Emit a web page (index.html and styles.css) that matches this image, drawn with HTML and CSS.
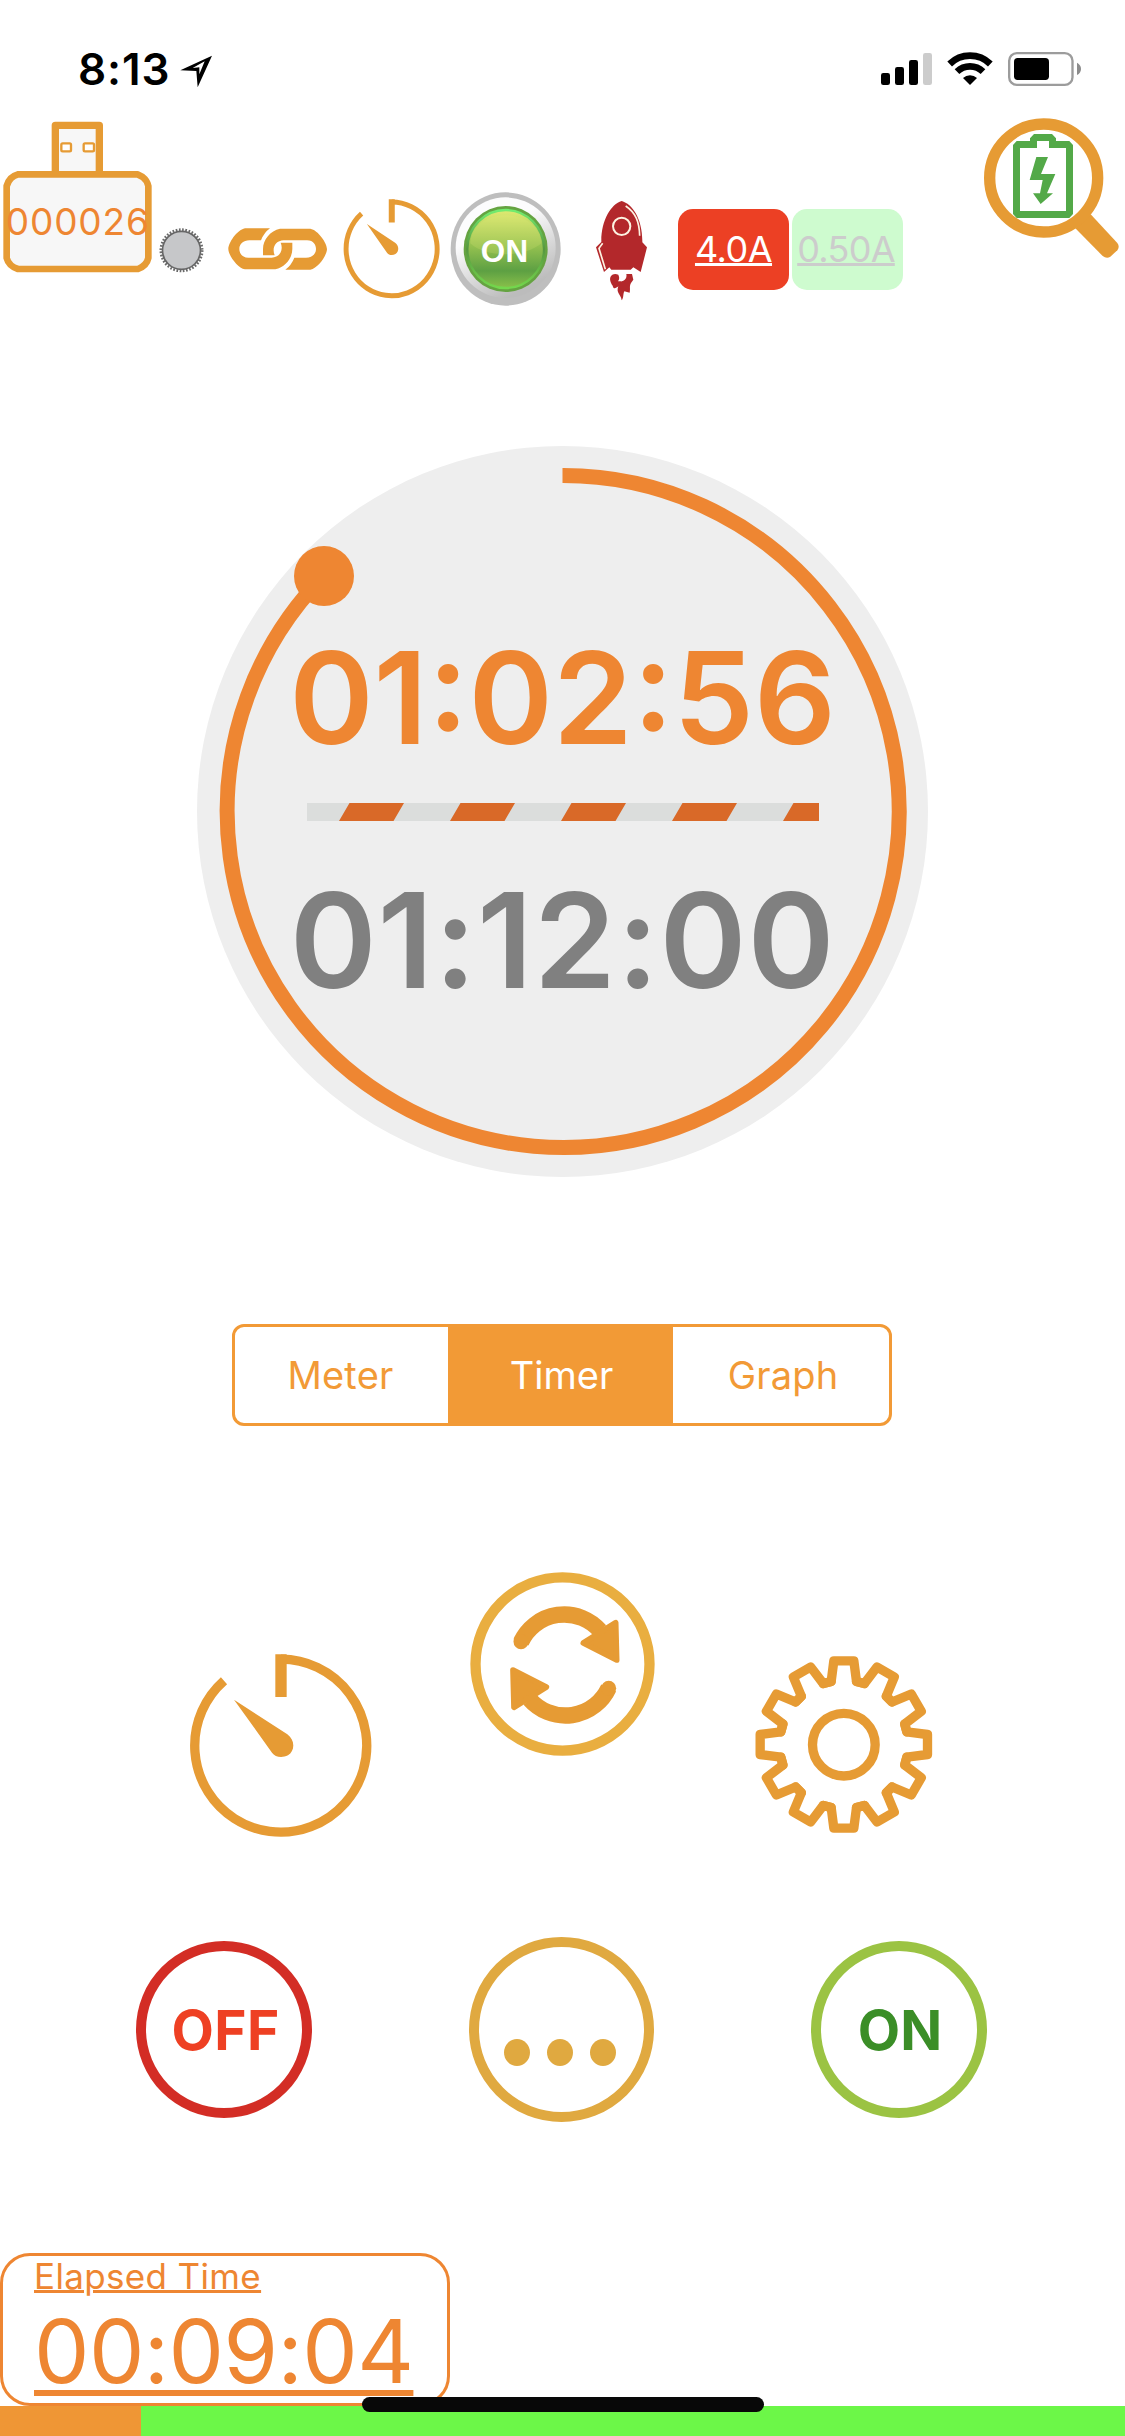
FILE: index.html
```
<!DOCTYPE html>
<html lang="en">
<head>
<meta charset="utf-8">
<title>Charge Timer</title>
<link rel="stylesheet" href="styles.css">
</head>
<body>
<svg class="defs" width="0" height="0" aria-hidden="true">
  <symbol id="stopwatch" viewBox="51 270 561 570" preserveAspectRatio="none">
    <path d="M333 297.500A258 259.500 0 1 1 162 362" fill="none" stroke="#e69b34" stroke-width="28"/>
    <path d="M316 283H350V411H316Z M192 419L352 523C376 540 375 573 354 586C335 595 315 591 306 578Z" fill="#e69b34"/>
  </symbol>
</svg>
<main class="app">
  <header class="status">
    <span class="clock">8:13</span>
    <svg class="locate" viewBox="540 76 99 99"><path fill-rule="evenodd" d="M541 122L636 78L593 173L589 124ZM578 115L614 95L598 134L598 113Z"/></svg>
    <svg class="signals" viewBox="60 60 609 114">
      <g><rect x="63" y="129" width="27" height="36" rx="7"/><rect x="105" y="111" width="27" height="54" rx="7"/><rect x="147" y="90" width="27" height="75" rx="7"/><rect x="189" y="69" width="27" height="96" rx="7" fill="#ccc"/></g>
      <g fill="none" stroke="#000" stroke-width="20"><path d="M269 102A87 87 0 0 1 391 102"/><path d="M291 125A56 56 0 0 1 369 125"/></g>
      <path d="M309 144A31 31 0 0 1 351 144L330 165Z"/>
      <rect x="447.500" y="69.500" width="190" height="95" rx="23" fill="none" stroke="#9c9c9c" stroke-width="7"/>
      <rect x="462" y="84" width="105" height="66" rx="11"/>
      <path d="M651 98C667 106 667 127 651 135Z" fill="#8c8c8c"/>
    </svg>
  </header>

  <nav class="tools">
    <svg class="usb" viewBox="0 255 468 480">
      <path d="M166 434V286H298V434" fill="#f7f7f7" stroke="#e69b34" stroke-width="22" stroke-linejoin="round"/>
      <path d="M55 433H412L428 441Q442 452 445 468V684Q440 707 414 717H54Q26 708 20 684V468Q28 440 55 433Z" fill="#f7f7f7" stroke="#e69b34" stroke-width="20" stroke-linejoin="round"/>
      <rect x="184" y="340" width="29" height="24" rx="4" fill="#fff" stroke="#e69b34" stroke-width="7"/>
      <rect x="251" y="340" width="31" height="24" rx="4" fill="#fff" stroke="#e69b34" stroke-width="7"/>
      <text class="usb-id" x="17" y="614" textLength="430">000026</text>
    </svg>
    <svg class="knob" viewBox="468 585 156 150">
      <circle cx="544.500" cy="661" r="62" fill="none" stroke="#6a6a6a" stroke-width="8" stroke-dasharray="5 4.740"/>
      <circle cx="544.500" cy="661" r="57" fill="#c6c7c9" stroke="#666" stroke-width="5"/>
    </svg>
    <svg class="link" viewBox="672 585 324 150" fill="#e69b34">
      <path id="half" d="M810 595H735C710 600 685 640 685 657C685 675 712 714 735 718H826C855 712 877 685 877 657V638H842C851 660 840 682 815 683H745C725 683 718 668 718 657C718 642 730 631 748 631H783Q792 608 810 595Z"/>
      <use href="#half" transform="rotate(180 833 657)"/>
    </svg>
    <svg class="mini-watch"><use href="#stopwatch"/></svg>
    <svg class="power" viewBox="354 30 345 354">
      <defs>
        <linearGradient id="rim" x1="0" y1="0" x2=".5" y2="1"><stop offset=".4" stop-color="#fcfcfd"/><stop offset="1" stop-color="#bcbcbc"/></linearGradient>
        <linearGradient id="edge" x1="0" y1="0" x2="0" y2="1"><stop offset="0" stop-color="#72ed70"/><stop offset=".5" stop-color="#569640"/><stop offset="1" stop-color="#74d84d"/></linearGradient>
        <linearGradient id="face" x1="0" y1="0" x2="0" y2="1"><stop offset="0" stop-color="#e0ea72"/><stop offset=".47" stop-color="#93c04f"/><stop offset=".78" stop-color="#5da043"/><stop offset="1" stop-color="#8ac04a"/></linearGradient>
      </defs>
      <ellipse cx="527" cy="207" rx="165" ry="170" fill="#bebebe"/>
      <ellipse cx="527" cy="203" rx="150" ry="151" fill="url(#rim)"/>
      <ellipse cx="527" cy="207" rx="126" ry="129" fill="#65a341"/>
      <ellipse cx="527" cy="207" rx="115" ry="117" fill="url(#face)" stroke="url(#edge)" stroke-width="7"/>
      <path d="M421 190C424 78 630 78 634 190C590 230 472 238 421 190Z" fill="#e9ef82" opacity=".18"/>
      <text class="power-text" x="452" y="246" textLength="142">ON</text>
    </svg>
    <svg class="rocket" viewBox="789 57 171 312">
      <path fill="#b3282b" d="M875 63C907 72 938 116 937 187L951 202L932 276L910 262L902 269H844L838 262L822 276L798 202L814 186C813 122 843 72 875 63Z"/>
      <circle cx="875" cy="139" r="26" fill="none" stroke="#fdf3e2" stroke-width="6"/>
      <path d="M887 78C917 98 928 125 929 167" fill="none" stroke="#fdf3e2" stroke-width="5"/>
      <path d="M818 190L807 205L826 268" fill="none" stroke="#fdf3e2" stroke-width="5"/>
      <path fill="#b3282b" d="M865 284C850 277 837 287 841 303C845 317 849 315 849 321C852 328 859 324 865 319C857 340 873 342 875 361C882 352 878 345 883 334L899 338C902 324 897 320 903 309L910 299L906 282H889C893 300 874 306 872 304L864 304C870 295 867 290 865 284Z"/>
    </svg>
    <span class="amp amp-high">4.0A</span>
    <span class="amp amp-low">0.50A</span>
    <svg class="inspect" viewBox="366 255 420 435">
      <path d="M692 553L772 639Q780 650 772 661L751 680Q740 687 728 678L646 595Z" fill="#e69b34"/>
      <circle cx="551" cy="444" r="162" fill="#fff" stroke="#e69b34" stroke-width="34"/>
      <g fill="#53a948" fill-rule="evenodd">
        <path d="M470 333H510V325L522 312H576L588 325V333H628L639 345V552L628 564H470L459 552V345ZM480 354H531V333H567V354H618V543H480Z"/>
        <path d="M529 381H564L543 432H586L561 490H579L542 522L519 490H540L548 450H509Z"/>
      </g>
    </svg>
  </nav>

  <section class="dial">
    <svg class="ring" viewBox="197 446 731 731">
      <path d="M562.500 475.500A336 336 0 1 1 324.500 575" fill="none" stroke="#ee8632" stroke-width="15"/>
      <circle cx="324" cy="576" r="30" fill="#ee8632"/>
    </svg>
    <span class="remaining">01:02:56</span>
    <svg class="stripes" viewBox="0 0 512 18" fill="#d96928">
      <path d="M32 18L42.500 0H97L86.500 18ZM143 18L153.500 0H208L197.500 18ZM254 18L264.500 0H319L308.500 18ZM365 18L375.500 0H430L419.500 18ZM476 18L486.500 0H512V18Z"/>
    </svg>
    <span class="total">01:12:00</span>
  </section>

  <div class="tabs">
    <span class="tab tab-first">Meter</span>
    <span class="tab tab-active">Timer</span>
    <span class="tab tab-last">Graph</span>
  </div>

  <section class="actions">
    <svg class="watch"><use href="#stopwatch"/></svg>
    <svg class="refresh" viewBox="891 27 573 570">
      <ellipse cx="1177.500" cy="312" rx="261" ry="260" fill="none" stroke="#e9ae40" stroke-width="31"/>
      <g id="arrow">
        <path d="M1053 246A143 143 0 0 1 1290 212" fill="none" stroke="#e69b34" stroke-width="49"/>
        <circle cx="1053" cy="245" r="22.500" fill="#e69b34"/>
        <path d="M1337 188L1340 300L1240 249Z" fill="#e69b34" stroke="#e69b34" stroke-width="17" stroke-linejoin="round"/>
      </g>
      <use href="#arrow" transform="rotate(180 1184.500 315)"/>
    </svg>
    <svg class="gear" viewBox="66 66 552 552" fill="none" stroke="#e69b34" stroke-width="28" stroke-linejoin="round" stroke-linecap="round">
      <circle cx="341.500" cy="344" r="94"/>
      <g transform="translate(341.500 343.500)">
        <path id="tooth" d="M-61.600 -182.700L-38 -189L-30 -251H30L38 -189L61.600 -182.700"/>
        <use href="#tooth" transform="rotate(30)"/><use href="#tooth" transform="rotate(60)"/><use href="#tooth" transform="rotate(90)"/><use href="#tooth" transform="rotate(120)"/><use href="#tooth" transform="rotate(150)"/><use href="#tooth" transform="rotate(180)"/><use href="#tooth" transform="rotate(210)"/><use href="#tooth" transform="rotate(240)"/><use href="#tooth" transform="rotate(270)"/><use href="#tooth" transform="rotate(300)"/><use href="#tooth" transform="rotate(330)"/>
      </g>
    </svg>
  </section>

  <section class="switches">
    <span class="round off">OFF</span>
    <span class="round more"><i class="dot"></i><i class="dot"></i><i class="dot"></i></span>
    <span class="round on">ON</span>
  </section>

  <section class="elapsed">
    <span class="elapsed-label">Elapsed Time</span>
    <span class="elapsed-time">00:09:04</span>
  </section>
  <div class="progress"><div class="progress-done"></div></div>
  <div class="home"></div>
</main>
</body>
</html>
```
FILE: styles.css
```
* { box-sizing: border-box; }
body { margin: 0; background: #fff; font-family: Inter, "Liberation Sans", sans-serif; }
svg { display: block; flex: none; }
.defs { position: absolute; }
.app { position: relative; width: 1125px; height: 2436px; overflow: hidden; display: flex; flex-direction: column; }
.app > * { flex: none; }

.status { height: 115px; display: flex; align-items: flex-start; padding: 50px 40px 0 78px; }
.clock { width: 102px; font-size: 44px; font-weight: 600; line-height: 38px; letter-spacing: 0.9px; white-space: nowrap; }
.locate { width: 33px; height: 33px; margin-top: 5px; }
.signals { width: 203px; height: 38px; margin-left: auto; margin-right: 2px; }

.tools { height: 331px; display: flex; align-items: flex-start; }
.usb { width: 156px; height: 160px; }
.usb-id { font-size: 111px; font-weight: 400; fill: #ee8632; }
.knob { width: 52px; height: 50px; margin-top: 110px; }
.link { width: 108px; height: 50px; margin: 110px 0 0 16px; }
.mini-watch { width: 99px; height: 103px; margin: 82px 0 0 10px; }
.power { width: 115px; height: 118px; margin: 75px 0 0 7px; }
.power-text { font-family: "Liberation Sans", sans-serif; font-size: 94px; font-weight: 700; fill: #fff; }
.rocket { width: 57px; height: 104px; margin: 84px 0 0 30px; }
.amp { width: 111px; height: 81px; margin-top: 94px; border-radius: 15px; font-size: 36px; font-weight: 400; line-height: 81px; text-align: center; text-decoration: underline; text-decoration-thickness: 3px; text-underline-offset: 1px; text-decoration-skip-ink: none; white-space: nowrap; }
.amp-high { margin-left: 28px; background: #ec4024; color: #fff; letter-spacing: -0.5px; }
.amp-low { margin-left: 3px; background: #cefbcf; color: #ccc; letter-spacing: -0.7px; padding-right: 3px; }
.inspect { width: 140px; height: 145px; margin-left: 79px; }

.dial { position: relative; width: 731px; height: 731px; margin-left: 197px; padding-top: 187px; border-radius: 50%; background: #eee; display: flex; flex-direction: column; align-items: center; }
.ring { position: absolute; left: 0; top: 0; width: 731px; height: 731px; }
.remaining, .total { position: relative; line-height: 130px; font-weight: 600; white-space: nowrap; }
.remaining { font-size: 128px; color: #ee8632; }
.total { margin-top: 54px; font-size: 132px; letter-spacing: 0.8px; color: #808080; }
.stripes { position: relative; width: 512px; height: 18px; margin-top: 40px; background: #dbdddc; }

.tabs { width: 660px; height: 102px; margin: 147px 0 0 232px; display: flex; border: 3px solid #f29a36; border-radius: 12px; font-size: 38px; line-height: 96px; color: #f29a36; text-align: center; }
.tab-first { width: 213px; letter-spacing: 0.2px; padding-right: 2px; }
.tab-active { width: 225px; background: #f29a36; color: #fff; padding-left: 2px; }
.tab-last { width: 216px; letter-spacing: 0.2px; padding-left: 4px; }

.actions { height: 276px; margin-top: 143px; padding-left: 187px; display: flex; align-items: flex-start; }
.watch { width: 187px; height: 190px; margin-top: 81px; }
.refresh { width: 191px; height: 190px; margin-left: 93px; }
.gear { width: 184px; height: 184px; margin: 83px 0 0 94px; }

.switches { height: 185px; margin-top: 92px; padding-left: 136px; display: flex; align-items: center; }
.round { width: 176px; height: 177px; border: 10px solid; border-radius: 50%; display: flex; align-items: center; justify-content: center; font-size: 55px; font-weight: 700; }
.off { border-color: #d32d25; color: #ee4023; padding-left: 3px; letter-spacing: 0.4px; }
.more { width: 185px; height: 185px; margin-left: 157px; border-color: #e0a940; padding: 45px 3px 0 0; gap: 17px; }
.dot { width: 26px; height: 27px; border-radius: 50%; background: #e0a940; }
.on { margin-left: 157px; padding-left: 2px; border-color: #9bc343; color: #3b8e27; }

.elapsed { width: 450px; height: 153px; margin-top: 131px; padding: 4px 0 0 31px; border: 3px solid #ee8632; border-radius: 30px; display: flex; flex-direction: column; align-items: flex-start; color: #ee8632; white-space: nowrap; }
.elapsed-label { font-size: 35px; font-weight: 400; line-height: 32px; letter-spacing: 0.35px; text-decoration: underline; text-decoration-thickness: 3px; text-underline-offset: 1px; }
.elapsed-time { margin-top: 14px; font-size: 88px; font-weight: 400; line-height: 90px; letter-spacing: -0.6px; text-decoration: underline; text-decoration-thickness: 6px; text-underline-offset: 7px; }
.progress { height: 30px; background: #6cf748; }
.progress-done { width: 141px; height: 30px; background: #ef9635; }
.home { position: absolute; left: 362px; top: 2397px; width: 402px; height: 15px; border-radius: 8px; background: #080808; }
```
